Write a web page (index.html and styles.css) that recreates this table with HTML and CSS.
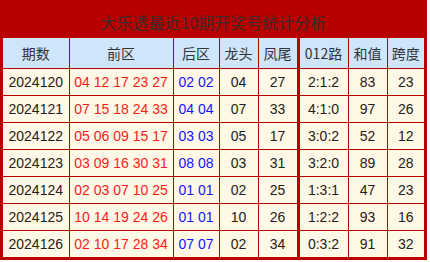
FILE: index.html
```html
<!DOCTYPE html>
<html lang="zh">
<head>
<meta charset="utf-8">
<title>大乐透最近10期开奖号统计分析</title>
<link rel="stylesheet" href="styles.css">
</head>
<body>
<div class="board">
  <div class="title">大乐透最近10期开奖号统计分析</div>
  <table class="stats">
    <colgroup>
      <col class="c-issue"><col class="c-front"><col class="c-back"><col class="c-head"><col class="c-tail"><col class="c-road"><col class="c-sum"><col class="c-span">
    </colgroup>
    <thead>
      <tr><th>期数</th><th>前区</th><th>后区</th><th>龙头</th><th>凤尾</th><th class="sep">012路</th><th>和值</th><th>跨度</th></tr>
    </thead>
    <tbody>
      <tr><td>2024120</td><td class="red">04 12 17 23 27</td><td class="blue">02 02</td><td>04</td><td>27</td><td class="sep">2:1:2</td><td>83</td><td>23</td></tr>
      <tr><td>2024121</td><td class="red">07 15 18 24 33</td><td class="blue">04 04</td><td>07</td><td>33</td><td class="sep">4:1:0</td><td>97</td><td>26</td></tr>
      <tr><td>2024122</td><td class="red">05 06 09 15 17</td><td class="blue">03 03</td><td>05</td><td>17</td><td class="sep">3:0:2</td><td>52</td><td>12</td></tr>
      <tr><td>2024123</td><td class="red">03 09 16 30 31</td><td class="blue">08 08</td><td>03</td><td>31</td><td class="sep">3:2:0</td><td>89</td><td>28</td></tr>
      <tr><td>2024124</td><td class="red">02 03 07 10 25</td><td class="blue">01 01</td><td>02</td><td>25</td><td class="sep">1:3:1</td><td>47</td><td>23</td></tr>
      <tr><td>2024125</td><td class="red">10 14 19 24 26</td><td class="blue">01 01</td><td>10</td><td>26</td><td class="sep">1:2:2</td><td>93</td><td>16</td></tr>
      <tr><td>2024126</td><td class="red">02 10 17 28 34</td><td class="blue">07 07</td><td>02</td><td>34</td><td class="sep">0:3:2</td><td>91</td><td>32</td></tr>
    </tbody>
  </table>
</div>
</body>
</html>
```
FILE: styles.css
```css
html, body {
  margin: 0;
  padding: 0;
  background: #ffffff;
}

.board {
  width: 421px;
  border: 3px solid #b80000;
  background: #b80000;
  font-family: "Liberation Sans", "Noto Sans CJK SC", sans-serif;
}

.title {
  height: 35px;
  line-height: 38px;
  text-align: center;
  font-family: "Noto Sans CJK SC", sans-serif;
  font-size: 16px;
  color: #3c2a2a;
  background: #b80000;
}

.stats {
  width: 421px;
  border-collapse: collapse;
  table-layout: fixed;
  background: #fff8e6;
}

.c-issue { width: 66px; }
.c-front { width: 104px; }
.c-back { width: 46px; }
.c-head { width: 39px; }
.c-tail { width: 40px; }
.c-road { width: 50px; }
.c-sum { width: 39px; }
.c-span { width: 37px; }

.stats th,
.stats td {
  padding: 0;
  border: 1px solid #b80000;
  text-align: center;
  white-space: nowrap;
  overflow: hidden;
}

.stats th {
  height: 30px;
  background: #cfe5fa;
  font-family: "Noto Sans CJK SC", sans-serif;
  font-weight: normal;
  font-size: 14px;
  color: #333333;
  border-top: none;
}

.stats td {
  height: 26px;
  font-size: 14px;
  color: #222222;
}

.stats tr > :first-child { border-left: none; }
.stats tr > :last-child { border-right: none; }
.stats tbody tr:last-child td { border-bottom: none; }

.stats .sep { border-left: 3px solid #b80000; }

.stats td.red { color: #ff1a1a; }
.stats td.blue { color: #1414ff; }
```
